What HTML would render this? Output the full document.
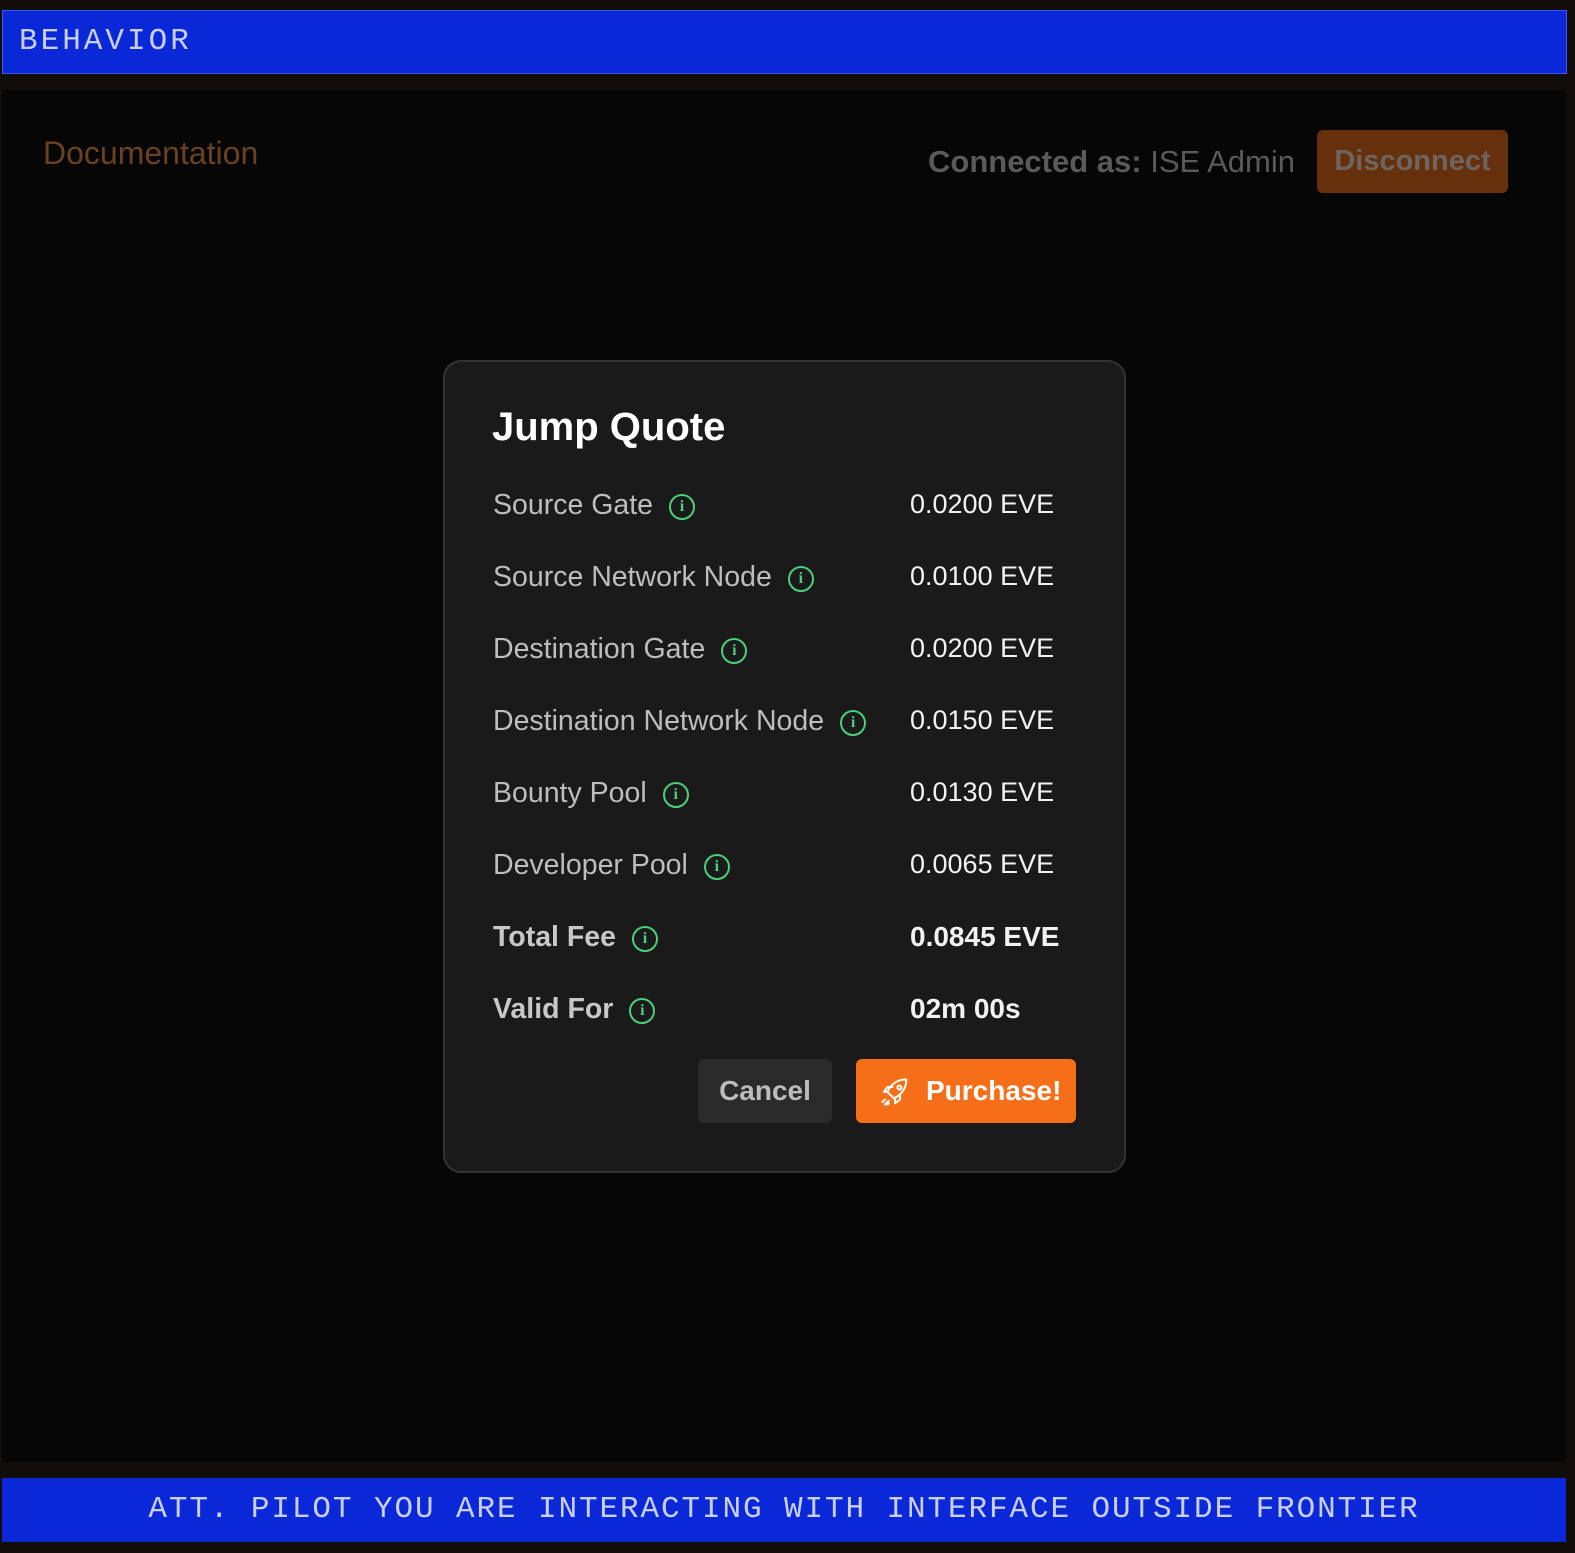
<!DOCTYPE html>
<html><head><meta charset="utf-8"><style>
*{box-sizing:border-box;margin:0;padding:0}
html,body{width:1575px;height:1553px;overflow:hidden;background:#110d0a;font-family:"Liberation Sans",sans-serif}
.topbar{position:absolute;left:2px;top:10px;width:1565px;height:64px;background:#0a28d8;border:1px solid #3c58ee;color:#c9cff0;font-family:"Liberation Mono",monospace;font-size:31px;letter-spacing:3px;padding-left:16px;line-height:62px}
.main{position:absolute;left:2px;top:90px;width:1563px;height:1372px;background:#060606}
.doc{position:absolute;left:43px;top:135px;font-size:32px;color:#6b4220}
.conn{position:absolute;left:928px;top:144px;font-size:31px;color:#5a5a5a}
.conn b{color:#5a5a5a}
.disc{position:absolute;left:1317px;top:130px;width:191px;height:63px;background:#66300c;border-radius:6px;color:#6e6460;font-size:29px;font-weight:bold;text-align:center;line-height:63px}
.modal{position:absolute;left:443px;top:360px;width:683px;height:813px;background:#1a1a1a;border:2px solid #333;border-radius:18px}
.modal h1{position:absolute;left:47px;top:43px;font-size:40px;color:#fff;font-weight:bold}
.row{position:absolute;left:48px;width:600px;height:40px;font-size:28.5px;color:#bdbdbd}
.row .l{position:absolute;left:0;top:0;white-space:nowrap}
.row .v{position:absolute;left:417px;top:0;color:#f2f2f2;white-space:nowrap;font-size:27px}
.row.b{font-weight:bold}
.row.b .l{color:#c8c8c8}
.row.b .v{font-size:28px}
.info{display:inline-block;width:26px;height:26px;border:2px solid #4ad07a;border-radius:50%;color:#4ad07a;font-size:16px;font-weight:bold;text-align:center;line-height:22px;vertical-align:3px;margin-left:16px;font-family:"Liberation Serif",serif}
.cancel{position:absolute;left:253px;top:697px;width:134px;height:64px;background:#2a2a2a;border-radius:6px;color:#bcbcbc;font-size:28px;font-weight:bold;text-align:center;line-height:64px}
.buy{position:absolute;left:411px;top:697px;width:220px;height:64px;background:#f76e18;border-radius:6px;color:#fff;font-size:28px;font-weight:bold;line-height:64px;padding-left:70px}
.buy svg{position:absolute;left:24px;top:18px}
.botbar{position:absolute;left:2px;top:1478px;width:1564px;height:64px;background:#0a28d8;color:#c9cff0;font-family:"Liberation Mono",monospace;font-size:31px;letter-spacing:1.9px;text-align:center;line-height:64px}
</style></head><body>
<div class="topbar">BEHAVIOR</div>
<div class="main"></div>
<div class="doc">Documentation</div>
<div class="conn"><b>Connected as:</b> ISE Admin</div>
<div class="disc">Disconnect</div>
<div class="modal">
<h1>Jump Quote</h1>
<div class="row" style="top:127px"><span class="l">Source Gate<span class="info">i</span></span><span class="v">0.0200 EVE</span></div>
<div class="row" style="top:199px"><span class="l">Source Network Node<span class="info">i</span></span><span class="v">0.0100 EVE</span></div>
<div class="row" style="top:271px"><span class="l">Destination Gate<span class="info">i</span></span><span class="v">0.0200 EVE</span></div>
<div class="row" style="top:343px"><span class="l">Destination Network Node<span class="info">i</span></span><span class="v">0.0150 EVE</span></div>
<div class="row" style="top:415px"><span class="l">Bounty Pool<span class="info">i</span></span><span class="v">0.0130 EVE</span></div>
<div class="row" style="top:487px"><span class="l">Developer Pool<span class="info">i</span></span><span class="v">0.0065 EVE</span></div>
<div class="row b" style="top:559px"><span class="l">Total Fee<span class="info">i</span></span><span class="v">0.0845 EVE</span></div>
<div class="row b" style="top:631px"><span class="l">Valid For<span class="info">i</span></span><span class="v">02m 00s</span></div>
<div class="cancel">Cancel</div>
<div class="buy"><svg width="30" height="30" viewBox="0 0 24 24" fill="none" stroke="#fff" stroke-width="1.6" stroke-linecap="round" stroke-linejoin="round"><path d="M9 15l-3-3c1-3 4-7 9-9 2-1 5-1 6-1 0 1 0 4-1 6-2 5-6 8-9 9z"/><path d="M6 12H3l3-4h4"/><path d="M12 18v3l4-3v-4"/><circle cx="15.5" cy="8.5" r="1.6"/><path d="M2 20l2-2M4 22l3-3M6 22l1-1"/></svg>Purchase!</div>
</div>
<div class="botbar">ATT. PILOT YOU ARE INTERACTING WITH INTERFACE OUTSIDE FRONTIER</div>
</body></html>
